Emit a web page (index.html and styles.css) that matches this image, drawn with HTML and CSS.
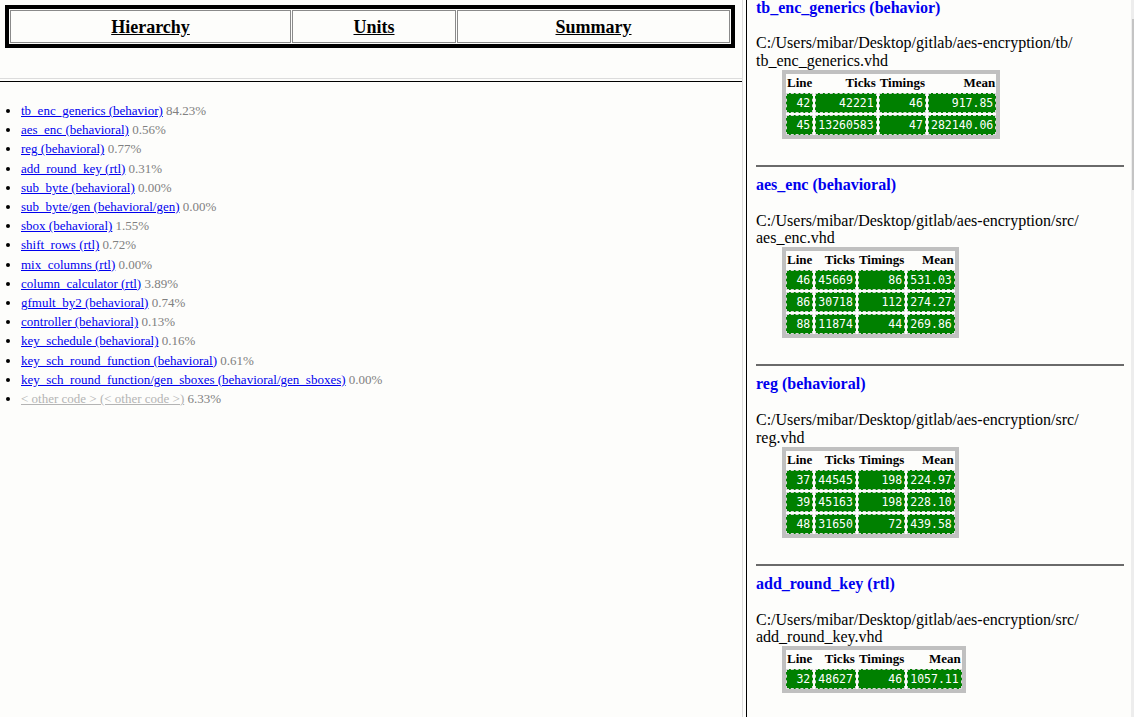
FILE: index.html
```html
<!DOCTYPE html>
<html>
<head>
<meta charset="utf-8">
<title>Profile report</title>
<link rel="stylesheet" href="styles.css">
</head>
<body>
<div class="left">
  <div class="topframe">
    <table class="nav">
      <tr>
        <td class="c1"><a href="#">Hierarchy</a></td>
        <td class="c2"><a href="#">Units</a></td>
        <td class="c3"><a href="#">Summary</a></td>
      </tr>
    </table>
  </div>
  <div class="hsplit"></div>
  <div class="bottomframe">
    <ul class="units">
      <li><a href="#">tb_enc_generics (behavior)</a> <span class="pct">84.23%</span></li>
      <li><a href="#">aes_enc (behavioral)</a> <span class="pct">0.56%</span></li>
      <li><a href="#">reg (behavioral)</a> <span class="pct">0.77%</span></li>
      <li><a href="#">add_round_key (rtl)</a> <span class="pct">0.31%</span></li>
      <li><a href="#">sub_byte (behavioral)</a> <span class="pct">0.00%</span></li>
      <li><a href="#">sub_byte/gen (behavioral/gen)</a> <span class="pct">0.00%</span></li>
      <li><a href="#">sbox (behavioral)</a> <span class="pct">1.55%</span></li>
      <li><a href="#">shift_rows (rtl)</a> <span class="pct">0.72%</span></li>
      <li><a href="#">mix_columns (rtl)</a> <span class="pct">0.00%</span></li>
      <li><a href="#">column_calculator (rtl)</a> <span class="pct">3.89%</span></li>
      <li><a href="#">gfmult_by2 (behavioral)</a> <span class="pct">0.74%</span></li>
      <li><a href="#">controller (behavioral)</a> <span class="pct">0.13%</span></li>
      <li><a href="#">key_schedule (behavioral)</a> <span class="pct">0.16%</span></li>
      <li><a href="#">key_sch_round_function (behavioral)</a> <span class="pct">0.61%</span></li>
      <li><a href="#">key_sch_round_function/gen_sboxes (behavioral/gen_sboxes)</a> <span class="pct">0.00%</span></li>
      <li><a href="#" class="other">&lt; other code &gt; (&lt; other code &gt;)</a> <span class="pct">6.33%</span></li>
    </ul>
  </div>
</div>
<div class="vsplit"></div>
<div class="rightframe">
  <div class="unit first">
    <div class="title">tb_enc_generics (behavior)</div>
    <div class="path">C:/Users/mibar/Desktop/gitlab/aes-encryption/tb/<br>tb_enc_generics.vhd</div>
    <div class="tbox">
      <table class="lines">
        <tr><th>Line</th><th>Ticks</th><th>Timings</th><th>Mean</th></tr>
        <tr><td>42</td><td>42221</td><td>46</td><td>917.85</td></tr>
        <tr><td>45</td><td>13260583</td><td>47</td><td>282140.06</td></tr>
      </table>
    </div>
  </div>
  <hr class="sep">
  <div class="unit">
    <div class="title">aes_enc (behavioral)</div>
    <div class="path">C:/Users/mibar/Desktop/gitlab/aes-encryption/src/<br>aes_enc.vhd</div>
    <div class="tbox">
      <table class="lines">
        <tr><th>Line</th><th>Ticks</th><th>Timings</th><th>Mean</th></tr>
        <tr><td>46</td><td>45669</td><td>86</td><td>531.03</td></tr>
        <tr><td>86</td><td>30718</td><td>112</td><td>274.27</td></tr>
        <tr><td>88</td><td>11874</td><td>44</td><td>269.86</td></tr>
      </table>
    </div>
  </div>
  <hr class="sep">
  <div class="unit">
    <div class="title">reg (behavioral)</div>
    <div class="path">C:/Users/mibar/Desktop/gitlab/aes-encryption/src/<br>reg.vhd</div>
    <div class="tbox">
      <table class="lines">
        <tr><th>Line</th><th>Ticks</th><th>Timings</th><th>Mean</th></tr>
        <tr><td>37</td><td>44545</td><td>198</td><td>224.97</td></tr>
        <tr><td>39</td><td>45163</td><td>198</td><td>228.10</td></tr>
        <tr><td>48</td><td>31650</td><td>72</td><td>439.58</td></tr>
      </table>
    </div>
  </div>
  <hr class="sep">
  <div class="unit">
    <div class="title">add_round_key (rtl)</div>
    <div class="path">C:/Users/mibar/Desktop/gitlab/aes-encryption/src/<br>add_round_key.vhd</div>
    <div class="tbox">
      <table class="lines">
        <tr><th>Line</th><th>Ticks</th><th>Timings</th><th>Mean</th></tr>
        <tr><td>32</td><td>48627</td><td>46</td><td>1057.11</td></tr>
      </table>
    </div>
  </div>
  <hr class="sep">
  <div class="scrolltrack"><div class="scrollthumb"></div></div>
</div>
</body>
</html>
```

FILE: styles.css
```css
html, body {
  margin: 0;
  padding: 0;
}
body {
  display: flex;
  height: 717px;
  overflow: hidden;
  background: #fdfdfb;
  font-family: "Liberation Serif", "Times New Roman", serif;
  color: #000;
}
.left {
  width: 742px;
  flex: none;
  display: flex;
  flex-direction: column;
}
.topframe {
  height: 78px;
  box-sizing: border-box;
  padding: 5px;
  flex: none;
}
.nav {
  border: 4px solid #000;
  border-spacing: 1px;
  table-layout: fixed;
}
.nav td {
  border: 1px solid #8a8a8a;
  padding: 6px 0 5px;
  text-align: center;
  font-size: 18px;
  line-height: 20px;
  font-weight: bold;
}
.nav .c1 { width: 279px; }
.nav .c2 { width: 162px; }
.nav .c3 { width: 271px; }
.nav a {
  color: #000;
}
.hsplit {
  height: 4px;
  box-sizing: border-box;
  border-top: 1px solid #dcdcdc;
  border-bottom: 1px solid #000;
  flex: none;
}
.bottomframe {
  flex: 1;
  padding: 19px 0 0 5px;
}
.units {
  margin: 0;
  padding-left: 16px;
  font-size: 13px;
  line-height: 19.2px;
}
.units a {
  color: #0000ee;
}
.units a.other {
  color: #b4b4b4;
}
.pct {
  color: #808080;
}
.vsplit {
  width: 5px;
  flex: none;
  box-sizing: border-box;
  border-left: 1px solid #dcdcdc;
  border-right: 1px solid #000;
}
.rightframe {
  flex: 1;
  position: relative;
  overflow: hidden;
  padding: 0 10px 0 9px;
}
.title {
  font-size: 16px;
  line-height: 17.7px;
  font-weight: bold;
  color: #0000ee;
  margin-bottom: 18.4px;
}
.unit.first {
  margin-top: -1px;
}
.unit.first .title {
  margin-bottom: 17.4px;
}
.path {
  font-size: 16px;
  line-height: 17.7px;
}
.tbox {
  width: fit-content;
  margin-left: 26px;
  padding: 2px;
  box-shadow: inset 0 0 0 4px #c0c0c0;
}
.lines {
  margin: 0;
  border-spacing: 2px;
}
.lines th {
  font-size: 13px;
  line-height: 15px;
  font-weight: bold;
  text-align: right;
  padding: 1px;
}
.lines td {
  background: #008000;
  color: #fff;
  border: 1px dashed #d8d8d8;
  font-family: "DejaVu Sans Mono", monospace;
  font-size: 11.5px;
  line-height: 14px;
  padding: 2px;
  text-align: right;
}
.sep {
  border: 0;
  height: 2px;
  background: #6a6a6a;
  margin: 26px 0 9px;
}
.scrolltrack {
  position: absolute;
  top: 0;
  right: 0;
  width: 3px;
  height: 717px;
  background: #ededed;
}
.scrollthumb {
  margin-top: 19px;
  margin-left: 1px;
  width: 2px;
  height: 171px;
  background: #c4c4c4;
}
```
